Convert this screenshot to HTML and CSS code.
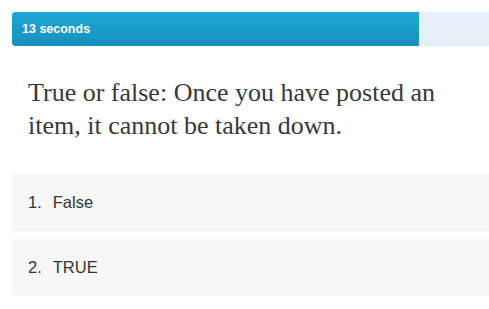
FILE: index.html
```html
<!DOCTYPE html>
<html>
<head>
<meta charset="utf-8">
<link rel="stylesheet" href="styles.css">
</head>
<body>
<div class="quiz">
  <div class="timer">
    <div class="timer-fill" style="width: 407px;"><span class="timer-label">13 seconds</span></div>
  </div>
  <div class="question">True or false: Once you have posted an item, it cannot be taken down.</div>
  <div class="options">
    <div class="option"><span class="num">1.</span><span class="label">False</span></div>
    <div class="option"><span class="num">2.</span><span class="label">TRUE</span></div>
  </div>
</div>
</body>
</html>
```

FILE: styles.css
```css
html, body {
  margin: 0;
  padding: 0;
  background: #ffffff;
  overflow: hidden;
}
.quiz {
  width: 480px;
  padding: 12px 0 0 12px;
  font-family: "Liberation Sans", Arial, sans-serif;
}
.timer {
  height: 34px;
  background: #e7f0f8;
  border-radius: 3px;
  box-shadow: 0 0 2px rgba(0, 0, 0, 0.08);
  overflow: hidden;
}
.timer-fill {
  height: 34px;
  background: linear-gradient(to bottom, #1fa7d6, #1790bd);
  border-radius: 3px 0 0 3px;
  display: flex;
  align-items: center;
  padding-left: 10px;
  box-sizing: border-box;
}
.timer-label {
  color: #ffffff;
  font-weight: bold;
  font-size: 12.5px;
}
.question {
  margin-top: 30px;
  padding: 0 20px 0 16px;
  font-family: "Liberation Serif", "Times New Roman", serif;
  font-size: 26px;
  line-height: 33px;
  color: #383838;
}
.options {
  margin-top: 32px;
  display: flex;
  flex-direction: column;
  gap: 8px;
}
.option {
  height: 57px;
  background: #f7f7f7;
  border-radius: 3px;
  display: flex;
  align-items: center;
  padding-left: 16px;
  font-size: 16.5px;
  color: #333333;
}
.num {
  margin-right: 11px;
}
```
